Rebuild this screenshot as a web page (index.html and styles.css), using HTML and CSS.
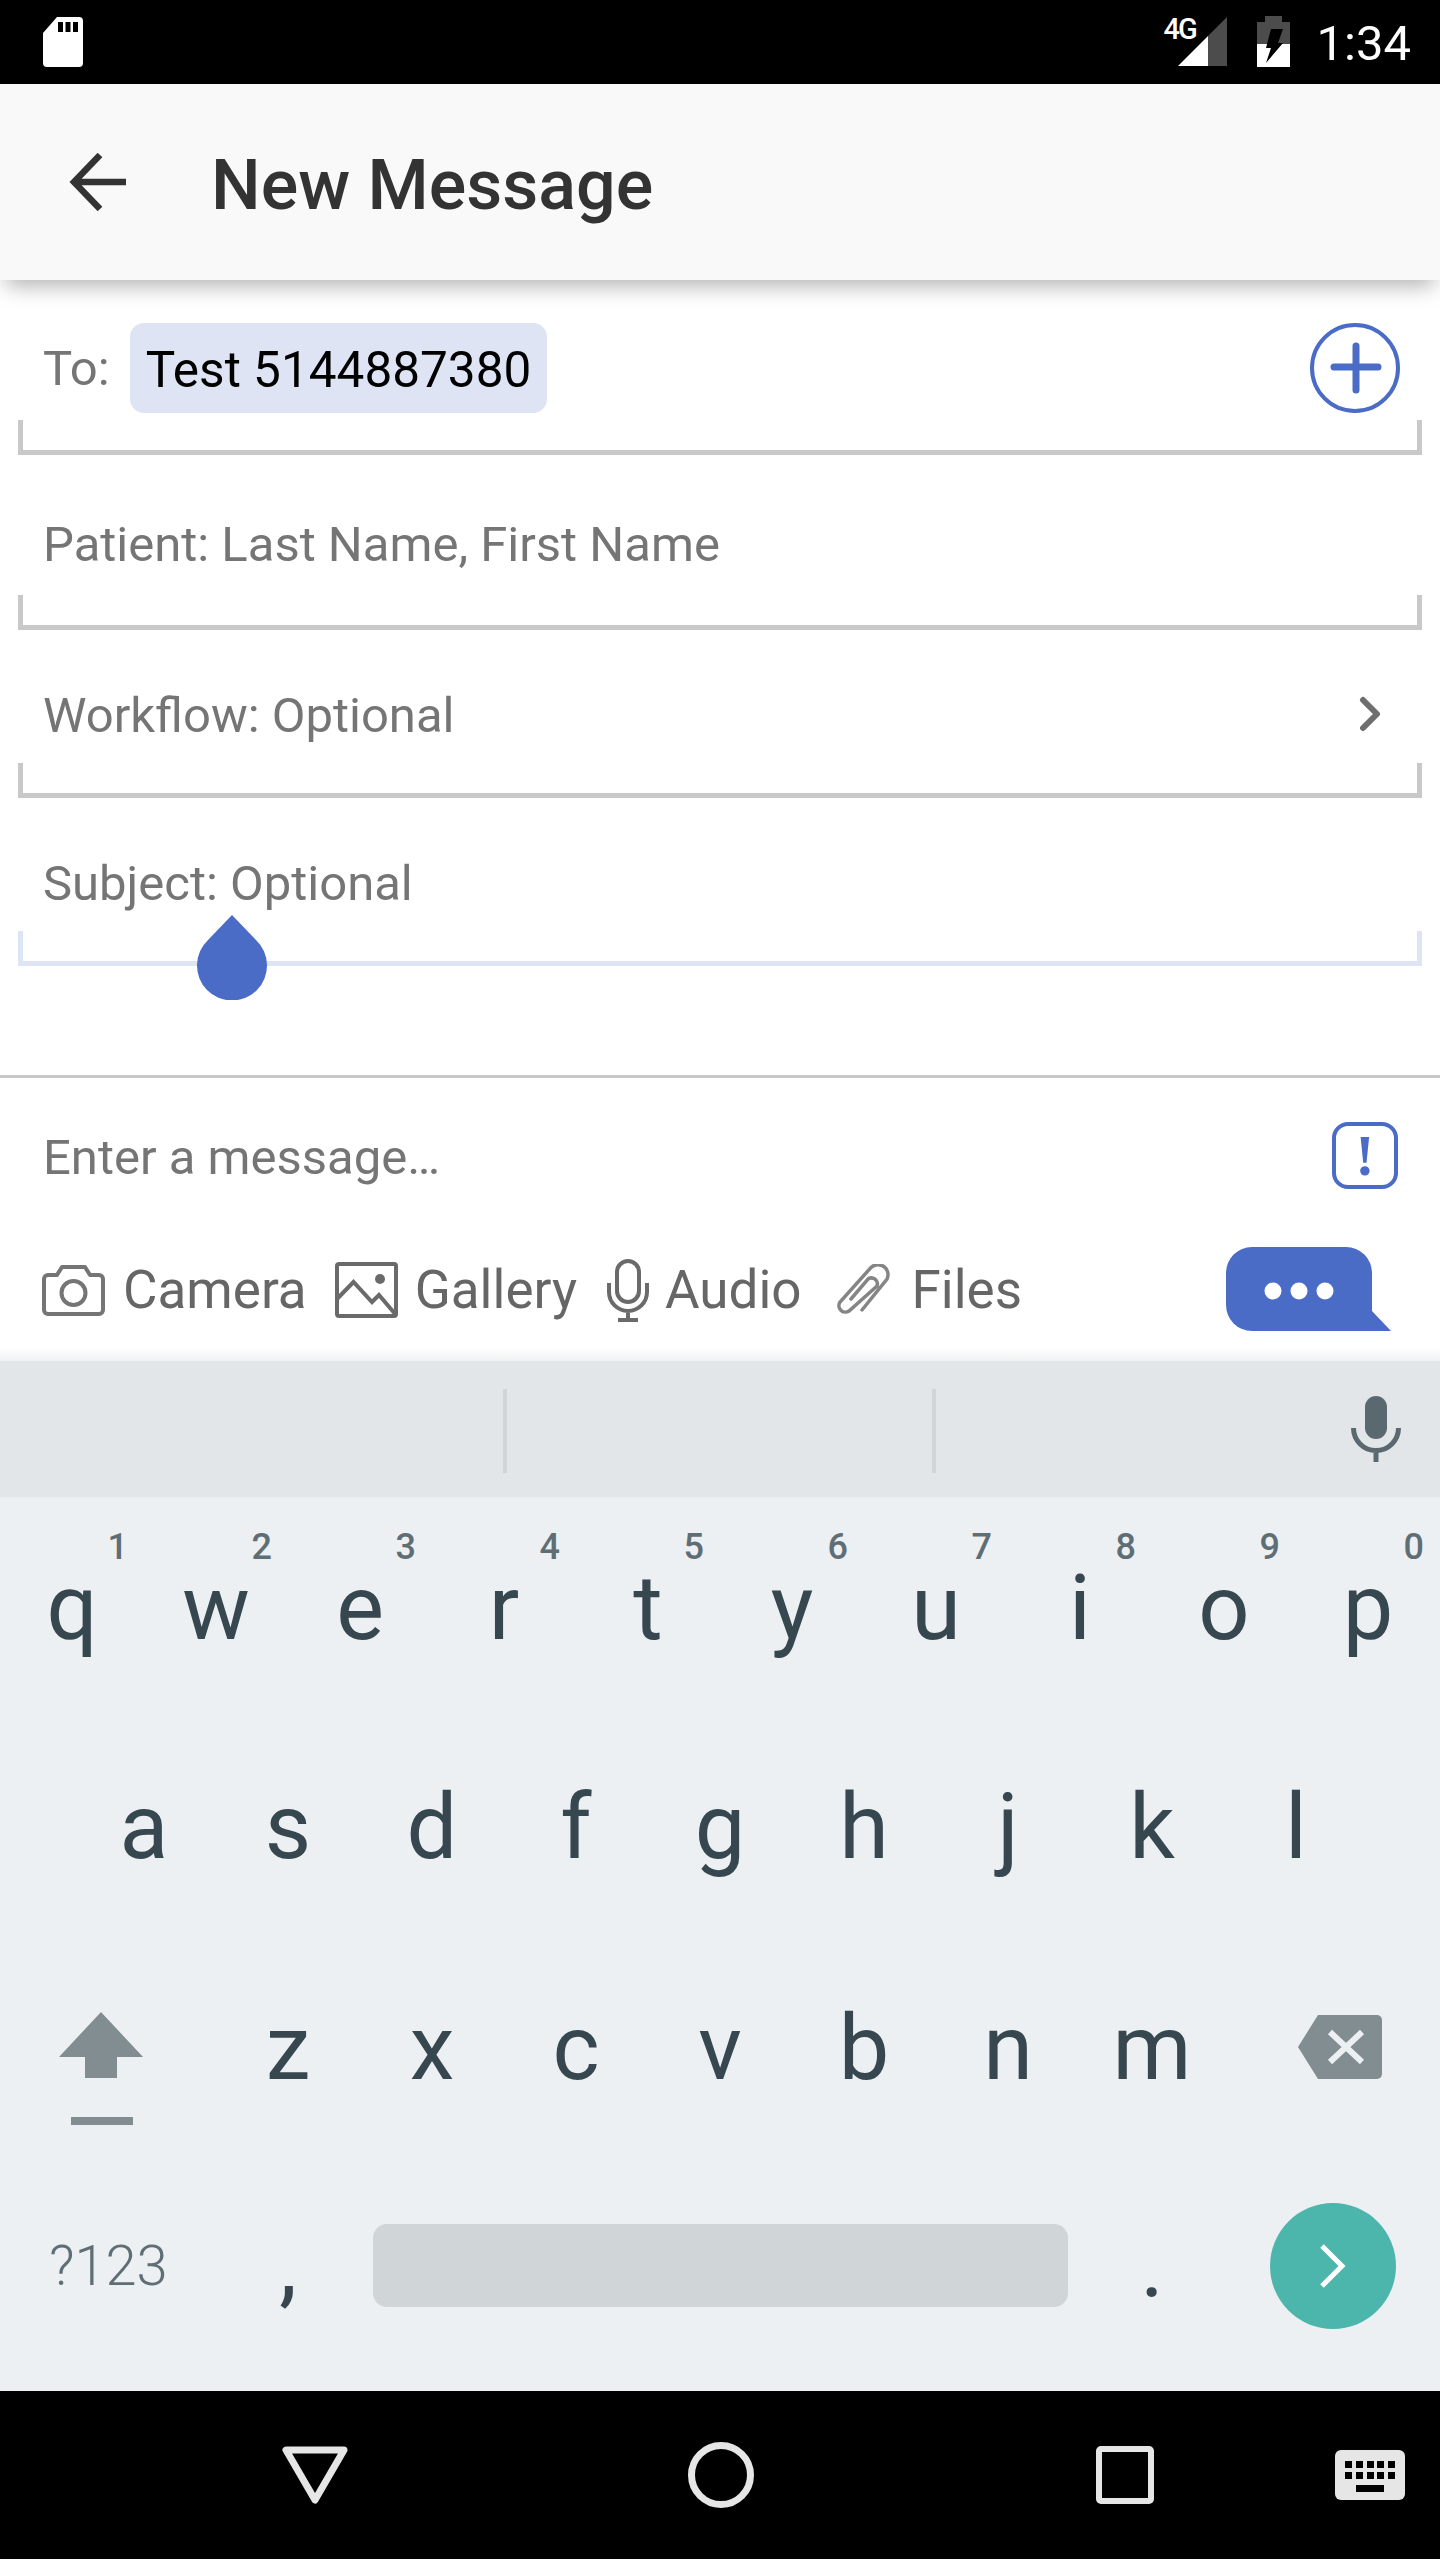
FILE: index.html
```html
<!DOCTYPE html>
<html lang="en">
<head>
  <meta charset="UTF-8">
  <meta name="viewport" content="width=device-width, initial-scale=1.0">
  <title>New Message</title>
  <link rel="stylesheet" href="styles.css">
</head>
<body>
  <div class="status-bar">
    <svg class="sd-icon" width="40" height="50" viewBox="0 0 40 50">
      <path fill="#fff" d="M14 0H36a4 4 0 0 1 4 4V46a4 4 0 0 1-4 4H4a4 4 0 0 1-4-4V16Z"/>
      <path fill="#000" d="M15 5h5v10h-5zM22.5 5h5v10h-5zM30 5h5v10h-5z"/>
    </svg>
    <div class="signal">
      <span class="network">4G</span>
      <svg width="49" height="49" viewBox="0 0 49 49">
        <path fill="#4c4c4c" d="M30 19 49 0V49H30Z"/>
        <path fill="#fff" d="M0 49 30 19V49Z"/>
      </svg>
    </div>
    <svg class="battery" width="33" height="51" viewBox="0 0 33 51">
      <path fill="#4c4c4c" d="M8 0H25V6H33V28H0V6H8Z"/>
      <path fill="#fff" d="M0 28H33V51H0Z"/>
      <path fill="#000" d="M14 13H26L21 27H26L9 47 14 32H9Z"/>
    </svg>
    <span class="clock">1:34</span>
  </div>

  <header class="app-bar">
    <svg class="back-icon" width="58" height="58" viewBox="0 0 58 58">
      <path fill="none" stroke="#333" stroke-width="6.5" d="M57 29H5M31 2 5 29 31 56"/>
    </svg>
    <h1>New Message</h1>
  </header>

  <main class="form">
    <div class="to-row">
      <span class="field-text to-label">To:</span>
      <span class="chip">Test 5144887380</span>
      <svg class="add-icon" width="90" height="90" viewBox="0 0 90 90">
        <circle cx="45" cy="45" r="43" fill="none" stroke="#4a6cc6" stroke-width="4"/>
        <path stroke="#4a6cc6" stroke-width="7" stroke-linecap="round" d="M24 44H68M46 23V67"/>
      </svg>
    </div>
    <div class="underline"></div>

    <div class="field field-tall"><span class="field-text">Patient: Last Name, First Name</span></div>
    <div class="underline"></div>

    <div class="field">
      <span class="field-text">Workflow: Optional</span>
      <svg class="chevron" width="24" height="36" viewBox="0 0 24 36">
        <path fill="none" stroke="#6e6e6e" stroke-width="6" stroke-linecap="round" stroke-linejoin="round" d="M4 4 18 18 4 32"/>
      </svg>
    </div>
    <div class="underline"></div>

    <div class="field"><span class="field-text">Subject: Optional</span></div>
    <div class="underline underline-active">
      <svg class="cursor-handle" width="70" height="85" viewBox="0 0 70 85">
        <path fill="#4a6cc6" d="M35 0 59 25A35 35 0 1 1 11 25Z"/>
      </svg>
    </div>
  </main>

  <section class="composer">
    <div class="message-row">
      <span class="field-text message-hint">Enter a message…</span>
      <span class="priority">!</span>
    </div>
    <div class="toolbar">
      <svg width="63" height="51" viewBox="0 0 63 51">
        <path fill="none" stroke="#757575" stroke-width="4" stroke-linejoin="round" d="M6 10H15L20 2H43L48 10H57a4 4 0 0 1 4 4V45a4 4 0 0 1-4 4H6a4 4 0 0 1-4-4V14a4 4 0 0 1 4-4Z"/>
        <circle cx="31.5" cy="28" r="12" fill="none" stroke="#757575" stroke-width="4"/>
      </svg>
      <span class="tool-label">Camera</span>
      <svg class="tool-icon tool-gallery" width="63" height="56" viewBox="0 0 63 56">
        <rect x="2" y="2" width="59" height="52" rx="2" fill="none" stroke="#6a6a6a" stroke-width="4"/>
        <circle cx="45" cy="17" r="5" fill="#6a6a6a"/>
        <path fill="none" stroke="#6a6a6a" stroke-width="4" d="M2 37 18.5 20 37 40 44 33 61 53"/>
      </svg>
      <span class="tool-label tool-label-gallery">Gallery</span>
      <svg class="tool-icon" width="42" height="63" viewBox="0 0 42 63">
        <rect x="10" y="2" width="22" height="41" rx="11" fill="none" stroke="#6a6a6a" stroke-width="4"/>
        <path fill="none" stroke="#6a6a6a" stroke-width="4" d="M2 24V33a19 19 0 0 0 38 0V24M21 52V61M11 61H31"/>
      </svg>
      <span class="tool-label tool-label-mic">Audio</span>
      <svg class="tool-icon tool-clip" width="53" height="53" viewBox="0 0 53 53">
        <path fill="none" stroke="#858585" stroke-width="3.5" stroke-linecap="round" d="M25 46 50 15A10 10 0 0 0 34 3.5L3 38A6.5 6.5 0 0 0 12 47L40 22A6 6 0 0 0 31 15L14 35"/>
      </svg>
      <span class="tool-label tool-label-clip">Files</span>
      <svg class="send" width="165" height="84" viewBox="0 0 165 84">
        <path fill="#4a6cc6" d="M26 0H120A26 26 0 0 1 146 26V64L165 84H26A26 26 0 0 1 0 58V26A26 26 0 0 1 26 0Z"/>
        <circle cx="47" cy="44" r="8.5" fill="#fff"/>
        <circle cx="73" cy="44" r="8.5" fill="#fff"/>
        <circle cx="99" cy="44" r="8.5" fill="#fff"/>
      </svg>
    </div>
  </section>

  <section class="suggestions">
    <div class="suggestion"></div>
    <div class="suggestion"></div>
    <div class="suggestion suggestion-mic">
      <svg width="50" height="66" viewBox="0 0 50 66">
        <rect x="14" y="0" width="22" height="43" rx="11" fill="#5a6870"/>
        <path fill="none" stroke="#5a6870" stroke-width="5" d="M2.5 32a22.5 22.5 0 0 0 45 0M25 54V66"/>
      </svg>
    </div>
  </section>

  <section class="keyboard">
    <div class="key-row">
      <span class="key">q<sup>1</sup></span>
      <span class="key">w<sup>2</sup></span>
      <span class="key">e<sup>3</sup></span>
      <span class="key">r<sup>4</sup></span>
      <span class="key">t<sup>5</sup></span>
      <span class="key">y<sup>6</sup></span>
      <span class="key">u<sup>7</sup></span>
      <span class="key">i<sup>8</sup></span>
      <span class="key">o<sup>9</sup></span>
      <span class="key">p<sup>0</sup></span>
    </div>
    <div class="key-row key-row-inset">
      <span class="key">a</span>
      <span class="key">s</span>
      <span class="key">d</span>
      <span class="key">f</span>
      <span class="key">g</span>
      <span class="key">h</span>
      <span class="key">j</span>
      <span class="key">k</span>
      <span class="key">l</span>
    </div>
    <div class="key-row key-row-shift">
      <span class="key key-shift">
        <svg width="84" height="113" viewBox="0 0 84 113">
          <path fill="#828d92" d="M42 0 84 45H58V66H26V45H0Z"/>
          <path fill="#828d92" d="M12 105H74V113H12Z"/>
        </svg>
      </span>
      <span class="key">z</span>
      <span class="key">x</span>
      <span class="key">c</span>
      <span class="key">v</span>
      <span class="key">b</span>
      <span class="key">n</span>
      <span class="key">m</span>
      <span class="key key-delete">
        <svg width="84" height="64" viewBox="0 0 84 64">
          <path fill="#828d92" d="M20 0H79a5 5 0 0 1 5 5V59a5 5 0 0 1-5 5H20L0 32Z"/>
          <path stroke="#ecf0f3" stroke-width="6" d="M32 17 64 47M64 17 32 47"/>
        </svg>
      </span>
    </div>
    <div class="key-row key-row-bottom">
      <span class="key key-symbols">?123</span>
      <span class="key">,</span>
      <span class="space-bar"></span>
      <span class="key">.</span>
      <span class="key key-enter">
        <span class="enter-button">
          <svg width="30" height="44" viewBox="0 0 30 44">
            <path fill="none" stroke="#fff" stroke-width="5" d="M3 2 23 22 3 42"/>
          </svg>
        </span>
      </span>
    </div>
  </section>

  <nav class="nav-bar">
    <svg width="66" height="58" viewBox="0 0 66 58">
      <path fill="none" stroke="#e6e6e6" stroke-width="7" stroke-linejoin="round" d="M4 4H62L33 54Z"/>
    </svg>
    <svg width="66" height="66" viewBox="0 0 66 66">
      <circle cx="33" cy="33" r="29.5" fill="none" stroke="#e6e6e6" stroke-width="7"/>
    </svg>
    <svg width="58" height="58" viewBox="0 0 58 58">
      <rect x="3" y="3" width="52" height="52" rx="2" fill="none" stroke="#e6e6e6" stroke-width="6"/>
    </svg>
    <svg class="keyboard-icon" width="70" height="50" viewBox="0 0 70 50">
      <rect width="70" height="50" rx="6" fill="#e6e6e6"/>
      <path fill="#000" d="M10 11h7v7h-7zM21 11h7v7h-7zM32 11h7v7h-7zM42 11h7v7h-7zM53 11h7v7h-7zM10 22h7v7h-7zM21 22h7v7h-7zM32 22h7v7h-7zM42 22h7v7h-7zM53 22h7v7h-7zM21 35h28v7h-28z"/>
    </svg>
  </nav>
</body>
</html>
```

FILE: styles.css
```css
* {
  box-sizing: border-box;
}
body {
  margin: 0;
  width: 1440px;
  height: 2560px;
  overflow: hidden;
  background: #fff;
  font-family: Roboto, sans-serif;
}
svg {
  display: block;
  flex: none;
}

/* status bar */
.status-bar {
  height: 84px;
  background: #000;
  display: flex;
  align-items: flex-start;
  padding: 17px 29px 0 43px;
}
.sd-icon {
  margin-right: auto;
}
.signal {
  position: relative;
}
.network {
  position: absolute;
  left: -14px;
  top: -3px;
  color: #fff;
  font-size: 29px;
  line-height: 30px;
  font-weight: 500;
  letter-spacing: -2px;
}
.battery {
  margin: -1px 27px 0 30px;
}
.clock {
  color: #fff;
  font-size: 49px;
  line-height: 52px;
  margin-top: 1px;
}

/* app bar */
.app-bar {
  position: relative;
  height: 196px;
  background: #f9f9f9;
  box-shadow: 0 12px 20px -6px rgba(0, 0, 0, 0.3);
  display: flex;
  align-items: center;
  padding-left: 69px;
}
.back-icon {
  margin-right: 84px;
}
h1 {
  margin: 6px 0 0;
  font-size: 70px;
  font-weight: 500;
  color: #333;
}

/* form fields */
.form {
  padding: 0 18px;
}
.field-text {
  font-size: 49px;
  line-height: 56px;
  color: #757575;
}
.to-row {
  display: flex;
  align-items: center;
  padding: 43px 22px 7px 25px;
}
.to-label {
  padding-top: 2px;
}
.chip {
  margin-left: 20px;
  height: 90px;
  padding: 4px 16px 0;
  display: flex;
  align-items: center;
  background: #dfe4f4;
  border-radius: 14px;
  font-size: 49.5px;
  color: #000;
}
.add-icon {
  margin-left: auto;
}
.underline {
  position: relative;
  height: 35px;
  border: 5px solid #c9c9c9;
  border-top: none;
}
.underline-active {
  border-color: #dde5f4;
}
.cursor-handle {
  position: absolute;
  left: 174px;
  top: -16px;
}
.field {
  height: 133px;
  padding: 58px 39px 0 25px;
  display: flex;
  align-items: flex-start;
  justify-content: space-between;
}
.field-tall {
  height: 140px;
  padding-top: 62px;
}
.chevron {
  margin-top: 8px;
}

/* message composer */
.composer {
  height: 286px;
  margin-top: 109px;
  border-top: 3px solid #c8c8c8;
  background: linear-gradient(#fff 270px, #f0f1f2 283px);
  padding: 0 42px 0 42px;
}
.message-row {
  display: flex;
  align-items: center;
  justify-content: space-between;
  height: 156px;
  padding-left: 1px;
}
.message-hint {
  padding-top: 3px;
}
.priority {
  width: 66px;
  height: 67px;
  margin-bottom: 2px;
  border: 4px solid #4a6cc6;
  border-radius: 16px;
  color: #4a6cc6;
  font-family: "Liberation Serif", serif;
  font-weight: 700;
  font-size: 58px;
  line-height: 59px;
  text-align: center;
}
.toolbar {
  display: flex;
  align-items: center;
  height: 112px;
  padding-right: 8px;
}
.tool-label {
  margin-left: 18px;
  font-size: 53px;
  color: #666;
}
.tool-icon {
  margin-left: 30px;
}
.tool-gallery {
  margin-left: 28px;
}
.tool-clip {
  margin-left: 35px;
}
.tool-label-gallery {
  margin-left: 17px;
}
.tool-label-mic {
  margin-left: 16px;
}
.tool-label-clip {
  margin-left: 22px;
}
.send {
  margin-left: auto;
  margin-right: -1px;
  margin-top: -3px;
}

/* suggestion strip */
.suggestions {
  height: 136px;
  background: #e2e6e9;
  display: grid;
  grid-template-columns: 507px 429px 1fr;
  padding-top: 28px;
}
.suggestion {
  height: 84px;
  border-right: 4px solid #cfd5d9;
}
.suggestion-mic {
  border-right: none;
  display: flex;
  justify-content: flex-end;
  padding: 7px 39px 0 0;
}

/* keyboard */
.keyboard {
  height: 894px;
  background: #ecf0f3;
  padding-top: 2px;
}
.key-row {
  height: 219px;
  display: grid;
  grid-template-columns: repeat(10, 144px);
}
.key-row-inset {
  padding-left: 72px;
}
.key-row-shift {
  height: 216px;
  margin-top: 3px;
  grid-template-columns: 216px repeat(7, 144px) 216px;
}
.key-row-bottom {
  grid-template-columns: 216px 144px 720px 144px 216px;
}
.key {
  position: relative;
  display: flex;
  align-items: center;
  justify-content: center;
  font-size: 90px;
  color: #37474f;
}
.key sup {
  position: absolute;
  right: 16px;
  top: 30px;
  font-size: 36px;
  line-height: 36px;
  font-weight: 500;
  color: #5f6e75;
}
.key-shift svg {
  margin: 41px 15px 0 0;
}
.key-delete svg {
  margin: -2px 0 0 16px;
}
.key-symbols {
  font-size: 56px;
  font-weight: 300;
  color: #5f6e75;
  justify-content: flex-start;
  padding-left: 49px;
}
.space-bar {
  align-self: center;
  justify-self: center;
  width: 695px;
  height: 83px;
  background: #d0d5d8;
  border-radius: 14px;
}
.key-enter {
  justify-content: flex-start;
  padding-left: 46px;
}
.enter-button {
  width: 126px;
  height: 126px;
  border-radius: 50%;
  background: #4db6ac;
  display: flex;
  align-items: center;
  justify-content: center;
  padding-left: 2px;
}

/* nav bar */
.nav-bar {
  height: 168px;
  background: #000;
  display: flex;
  align-items: center;
  padding: 0 35px 0 282px;
}
.nav-bar svg:nth-child(2) {
  margin-left: 340px;
}
.nav-bar svg:nth-child(3) {
  margin-left: 342px;
}
.keyboard-icon {
  margin-left: 181px;
}
```
